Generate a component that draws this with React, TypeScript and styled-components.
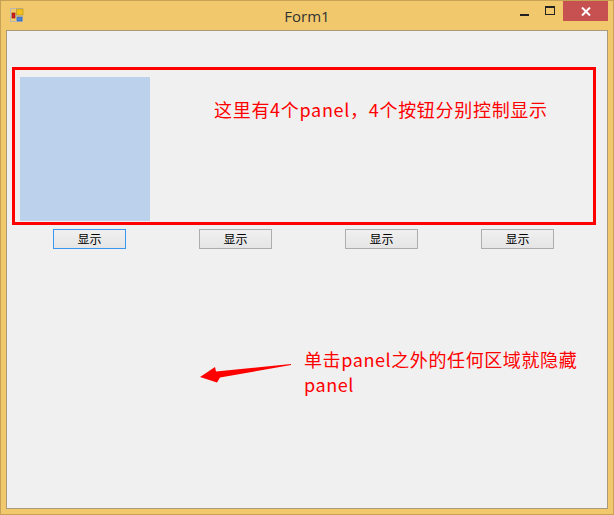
import React from "react";
import styled, { createGlobalStyle } from "styled-components";

const GlobalStyle = createGlobalStyle`
    html, body {
        margin: 0;
        padding: 0;
        background: #F0C86B;
    }
    * {
        box-sizing: border-box;
    }
`;

const buttons = [
    { offset: 0, focused: true },
    { offset: 73, focused: false },
    { offset: 73, focused: false },
    { offset: 63, focused: false },
];

const AppIcon = () => (
    <svg width="14" height="14" viewBox="0 0 14 14">
        <rect x="0.5" y="0.5" width="12" height="13" fill="none" stroke="#b8b8b8" />
        <line x1="6.5" y1="0" x2="6.5" y2="14" stroke="#c4c4c4" />
        <line x1="0" y1="7.5" x2="13" y2="7.5" stroke="#c4c4c4" />
        <rect x="2" y="5" width="3" height="5" fill="#d42020" stroke="#8a1010" strokeWidth="0.6" />
        <rect x="6.5" y="1" width="6.5" height="6" fill="#f3c21a" stroke="#b88a10" strokeWidth="0.6" />
        <rect x="7" y="9" width="5" height="4" fill="#4a86d8" stroke="#2a5aa0" strokeWidth="0.6" />
    </svg>
);

const Arrow = () => (
    <svg width="100" height="26" viewBox="0 0 100 26">
        <polygon points="4,17 19,7 20,11.5 95,4 95,5 24,17.5 21,22.5" fill="#ff0000" />
    </svg>
);

const App = () => {
    return (
        <>
            <GlobalStyle />
            <Window>
                <TitleBar>
                    <IconCell>
                        <AppIcon />
                    </IconCell>
                    <Title>Form1</Title>
                    <Controls>
                        <ControlBtn>
                            <MinGlyph />
                        </ControlBtn>
                        <ControlBtn>
                            <MaxGlyph />
                        </ControlBtn>
                        <CloseBtn>
                            <svg width="10" height="9" viewBox="0 0 10 9">
                                <path d="M1 0.5 L9 8.5 M9 0.5 L1 8.5" stroke="#fff" strokeWidth="2" />
                            </svg>
                        </CloseBtn>
                    </Controls>
                </TitleBar>
                <Client>
                    <PanelFrame>
                        <BluePanel />
                        <PanelText>这里有4个panel，4个按钮分别控制显示</PanelText>
                    </PanelFrame>
                    <ButtonRow>
                        {buttons.map((b, i) => (
                            <ShowButton key={i} $offset={b.offset} $focused={b.focused}>
                                显示
                            </ShowButton>
                        ))}
                    </ButtonRow>
                    <NoteRow>
                        <ArrowHolder>
                            <Arrow />
                        </ArrowHolder>
                        <NoteText>
                            单击panel之外的任何区域就隐藏
                            <br />
                            panel
                        </NoteText>
                    </NoteRow>
                </Client>
            </Window>
        </>
    );
};

export default App;

const Window = styled.div`
    width: 614px;
    height: 515px;
    border: 1px solid #c7a256;
    background: #f1c96c;
    display: flex;
    flex-direction: column;
`;

const TitleBar = styled.div`
    height: 29px;
    display: grid;
    grid-template-columns: 1fr auto 1fr;
    align-items: start;
`;

const IconCell = styled.div`
    padding: 7px 0 0 9px;
    display: flex;
`;

const Title = styled.div`
    font-family: "Open Sans", "Noto Sans", sans-serif;
    font-size: 15px;
    line-height: 20px;
    padding-top: 5px;
    color: #333333;
`;

const Controls = styled.div`
    display: flex;
    justify-content: flex-end;
    padding-right: 5px;
`;

const ControlBtn = styled.div`
    width: 26px;
    height: 20px;
    display: flex;
    align-items: center;
    justify-content: center;
`;

const MinGlyph = styled.div`
    width: 9px;
    height: 2px;
    margin-top: 8px;
    background: #222222;
`;

const MaxGlyph = styled.div`
    width: 10px;
    height: 9px;
    margin-top: -2px;
    border: 1px solid #222222;
    border-top-width: 2px;
`;

const CloseBtn = styled.div`
    width: 45px;
    height: 20px;
    background: #c75050;
    display: flex;
    align-items: center;
    justify-content: center;
`;

const Client = styled.div`
    flex: 1;
    margin: 0 5px 5px;
    border: 1px solid #a99a7c;
    background: #f0f0f0;
    display: flex;
    flex-direction: column;
    font-family: "Noto Sans CJK SC", "Noto Sans", sans-serif;
`;

const PanelFrame = styled.div`
    margin: 36px 0 0 5px;
    width: 584px;
    height: 158px;
    border: 3px solid #ff0000;
    padding: 7px 0 0 5px;
    display: flex;
    align-items: flex-start;
`;

const BluePanel = styled.div`
    width: 130px;
    height: 144px;
    background: #bcd1eb;
`;

const PanelText = styled.div`
    margin: 20px 0 0 64px;
    font-size: 18px;
    line-height: 24px;
    letter-spacing: 0.7px;
    color: #ff0000;
    white-space: nowrap;
`;

const ButtonRow = styled.div`
    display: flex;
    margin-top: 4px;
    padding-left: 46px;
`;

const ShowButton = styled.button<{ $offset: number; $focused: boolean }>`
    margin-left: ${(p) => p.$offset}px;
    width: 73px;
    height: 20px;
    padding: 0;
    border: 1px solid ${(p) => (p.$focused ? "#3c96f0" : "#adadad")};
    background: linear-gradient(#f0f0f0, #e5e5e5);
    font-family: "Noto Sans CJK SC", sans-serif;
    font-size: 12px;
    line-height: 16px;
    color: #000000;
`;

const NoteRow = styled.div`
    display: flex;
    align-items: flex-start;
    margin-top: 98px;
    padding-left: 189px;
`;

const ArrowHolder = styled.div`
    margin-top: 13px;
    display: flex;
`;

const NoteText = styled.div`
    margin-left: 8px;
    font-size: 18px;
    line-height: 25px;
    letter-spacing: 0.6px;
    color: #ff0000;
    white-space: nowrap;
`;
